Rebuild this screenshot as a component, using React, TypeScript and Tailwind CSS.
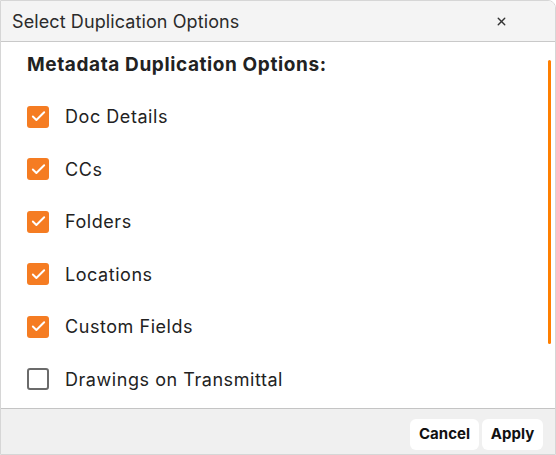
import { Check, X } from "lucide-react";

const options = [
    { label: "Doc Details", checked: true },
    { label: "CCs", checked: true },
    { label: "Folders", checked: true },
    { label: "Locations", checked: true },
    { label: "Custom Fields", checked: true },
    { label: "Drawings on Transmittal", checked: false },
];

function OptionRow({ label, checked }: { label: string; checked: boolean }) {
    return (
        <label className="flex items-center h-[52.5px] gap-4">
            {checked ? (
                <span className="w-[22px] h-[22px] rounded-[3px] bg-[#f57c22] flex items-center justify-center">
                    <Check size={17} strokeWidth={2.75} className="text-white" />
                </span>
            ) : (
                <span className="w-[22px] h-[22px] rounded-[3px] border-2 border-[#6b6b6b] bg-white" />
            )}
            <span className="text-[18px] tracking-[0.55px] text-[#222]">{label}</span>
        </label>
    );
}

export default function App() {
    return (
        <div
            className="w-[556px] h-[455px] flex flex-col bg-white border border-[#d6d6d6] rounded-tr-lg overflow-hidden"
            style={{ fontFamily: "Inter, 'Noto Sans', sans-serif" }}
        >
            <div className="h-[41px] shrink-0 flex items-center justify-between pl-[11px] pr-[47px] bg-[#f4f4f4] border-b border-[#c9c9c9]">
                <h1 className="text-[18px] tracking-[0.1px] text-[#2b2b2b]">Select Duplication Options</h1>
                <X size={13} strokeWidth={2.5} className="text-[#333]" />
            </div>

            <div className="relative flex-1 pl-[26px] pt-[9px]">
                <h2 className="text-[19px] tracking-[0.6px] font-bold text-[#222] mb-[11px]">
                    Metadata Duplication Options:
                </h2>
                <div className="flex flex-col">
                    {options.map((item) => (
                        <OptionRow key={item.label} label={item.label} checked={item.checked} />
                    ))}
                </div>
                <div className="absolute right-[4px] top-[18px] w-[3px] h-[284px] bg-[#ff7f00] rounded-full" />
            </div>

            <div className="h-[46px] shrink-0 flex items-start pt-[10px] justify-end gap-[3px] pr-[12px] bg-[#f0f0f0] border-t border-[#c4c4c4]">
                <button className="h-[31px] w-[69px] bg-white rounded-md text-[15px] font-bold text-[#111]">
                    Cancel
                </button>
                <button className="h-[31px] w-[61px] bg-white rounded-md text-[15px] font-bold text-[#111]">
                    Apply
                </button>
            </div>
        </div>
    );
}
